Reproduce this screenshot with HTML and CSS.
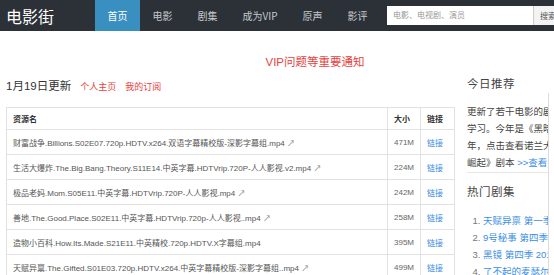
FILE: index.html
```html
<!DOCTYPE html>
<html lang="zh-CN">
<head>
  <meta charset="UTF-8" />
  <meta name="viewport" content="width=device-width, initial-scale=1.0"/>
  <title>电影街</title>
  <link rel="stylesheet" href="styles.css">
</head>
<body>

  <header class="topbar">
    <div class="logo">电影街</div>
    <nav class="nav">
      <a class="active" href="#">首页</a>
      <a href="#">电影</a>
      <a href="#">剧集</a>
      <a href="#">成为VIP</a>
      <a href="#">原声</a>
      <a href="#">影评</a>
    </nav>
    <form class="search">
      <input type="text" placeholder="电影、电视剧、演员">
      <button type="button">搜索</button>
    </form>
  </header>

  <div class="page">
    <p class="notice">VIP问题等重要通知</p>

    <div class="layout">
      <main class="main">
        <div class="update-bar">
          <span class="date">1月19日更新</span>
          <a href="#">个人主页</a>
          <a href="#">我的订阅</a>
        </div>

        <table class="res-table">
          <thead>
            <tr>
              <th class="col-name">资源名</th>
              <th class="col-size">大小</th>
              <th class="col-link">链接</th>
            </tr>
          </thead>
          <tbody>
            <tr>
              <td>财富战争.Billions.S02E07.720p.HDTV.x264.双语字幕精校版-深影字幕组.mp4 <span class="ext">↗</span></td>
              <td class="size">471M</td>
              <td><a href="#">链接</a></td>
            </tr>
            <tr>
              <td>生活大爆炸.The.Big.Bang.Theory.S11E14.中英字幕.HDTVrip.720P-人人影视.v2.mp4 <span class="ext">↗</span></td>
              <td class="size">224M</td>
              <td><a href="#">链接</a></td>
            </tr>
            <tr>
              <td>极品老妈.Mom.S05E11.中英字幕.HDTVrip.720P-人人影视.mp4 <span class="ext">↗</span></td>
              <td class="size">242M</td>
              <td><a href="#">链接</a></td>
            </tr>
            <tr>
              <td>善地.The.Good.Place.S02E11.中英字幕.HDTVrip.720p-人人影视..mp4 <span class="ext">↗</span></td>
              <td class="size">258M</td>
              <td><a href="#">链接</a></td>
            </tr>
            <tr>
              <td>造物小百科.How.Its.Made.S21E11.中英精校.720p.HDTV.X字幕组.mp4</td>
              <td class="size">395M</td>
              <td><a href="#">链接</a></td>
            </tr>
            <tr>
              <td>天赋异禀.The.Gifted.S01E03.720p.HDTV.x264.中英字幕精校版-深影字幕组..mp4 <span class="ext">↗</span></td>
              <td class="size">499M</td>
              <td><a href="#">链接</a></td>
            </tr>
          </tbody>
        </table>
      </main>

      <aside class="side">
        <h3 class="side-title first">今日推荐</h3>
        <p class="side-text">更新了若干电影的剧本，供大家参考学习。今年是《黑暗骑士》上映十周年，点击查看诺兰大神的《黑暗骑士崛起》剧本 <a href="#">&gt;&gt;查看</a></p>

        <h3 class="side-title">热门剧集</h3>
        <ol class="hot-list">
          <li><a href="#">天赋异禀 第一季</a></li>
          <li><a href="#">9号秘事 第四季 2018</a></li>
          <li><a href="#">黑镜 第四季 2017</a></li>
          <li><a href="#">了不起的麦瑟尔夫人</a></li>
        </ol>
      </aside>
    </div>
  </div>

  <div class="side-edge"></div>

</body>
</html>
```

FILE: styles.css
```css
html {
  overflow: hidden;
}

body {
  margin: 0;
  width: 630px;
  font-family: 'Liberation Sans', 'Noto Sans CJK SC', sans-serif;
  color: #333;
  background: #fff;
}

a {
  text-decoration: none;
}

/* top bar */
.topbar {
  display: flex;
  align-items: center;
  height: 31px;
  background: #2c3137;
}

.logo {
  width: 89px;
  padding-left: 6px;
  font-size: 16px;
  color: #fff;
}

.nav {
  display: flex;
  height: 100%;
  font-family: 'Noto Sans CJK SC', sans-serif;
}

.nav a {
  padding: 0 12.5px;
  line-height: 31px;
  font-size: 10px;
  color: #c5c9ce;
}

.nav a.active {
  background: #3a8fc1;
  color: #fff;
}

.search {
  display: flex;
  margin: 0 0 0 7px;
}

.search input {
  width: 146px;
  height: 19px;
  box-sizing: border-box;
  border: none;
  padding: 0 6px;
  font-family: inherit;
  font-size: 8px;
  outline: none;
}

.search input::placeholder {
  color: #999;
}

.search button {
  width: 30px;
  height: 19px;
  border: none;
  border-left: 1px solid #ccc;
  background: #f3f3f3;
  font-family: inherit;
  font-size: 8px;
  color: #555;
  padding: 0 0 0 6px;
  text-align: left;
}

/* page */
.page {
  padding: 0 6px;
}

.notice {
  margin: 0;
  padding-top: 22px;
  text-align: center;
  font-size: 11.5px;
  color: #e8413e;
}

.layout {
  display: flex;
  gap: 12px;
}

.main {
  width: 449px;
}

.update-bar {
  display: flex;
  align-items: baseline;
  gap: 9px;
  padding-top: 8px;
  height: 24px;
  box-sizing: border-box;
}

.update-bar .date {
  font-size: 11.5px;
  color: #333;
}

.update-bar a {
  font-size: 9px;
  color: #e8413e;
}

.res-table {
  width: 449px;
  margin-top: 14px;
  border-collapse: collapse;
  font-size: 8px;
  color: #555;
}

.res-table th,
.res-table td {
  height: 24px;
  padding: 0 6px;
  border: 1px solid #e2e2e2;
  text-align: left;
  white-space: nowrap;
}

.res-table th {
  height: 21px;
  font-weight: bold;
  color: #333;
}

.col-size {
  width: 20px;
}

.col-link {
  width: 21px;
}

.res-table .size {
  color: #666;
}

.res-table td a {
  color: #3a8ee6;
}

.ext {
  color: #888;
  font-size: 8px;
}

/* sidebar */
.side {
  width: 152px;
  flex-shrink: 0;
}

.side-title {
  margin: 0;
  padding-top: 11px;
  font-size: 11.5px;
  font-weight: normal;
  line-height: 17px;
  color: #444;
  letter-spacing: 0.5px;
}

.side-title.first {
  padding-top: 7px;
}

.side-text {
  margin: 10px 0 0;
  padding-bottom: 1px;
  border-bottom: 1px solid #e6e6e6;
  font-size: 9.5px;
  line-height: 17px;
  color: #444;
}

.side-text a {
  color: #3a8ee6;
}

.hot-list {
  margin: 11px 0 0;
  padding-left: 16px;
  font-size: 9.5px;
  line-height: 17px;
  color: #777;
}

.hot-list a {
  color: #3a8ee6;
}

/* thin edge of the floating panel on the right */
.side-edge {
  position: fixed;
  left: 548px;
  top: 93px;
  bottom: 0;
  width: 10px;
  border-left: 1px solid #dcdcdc;
  background: #fff;
}
```
